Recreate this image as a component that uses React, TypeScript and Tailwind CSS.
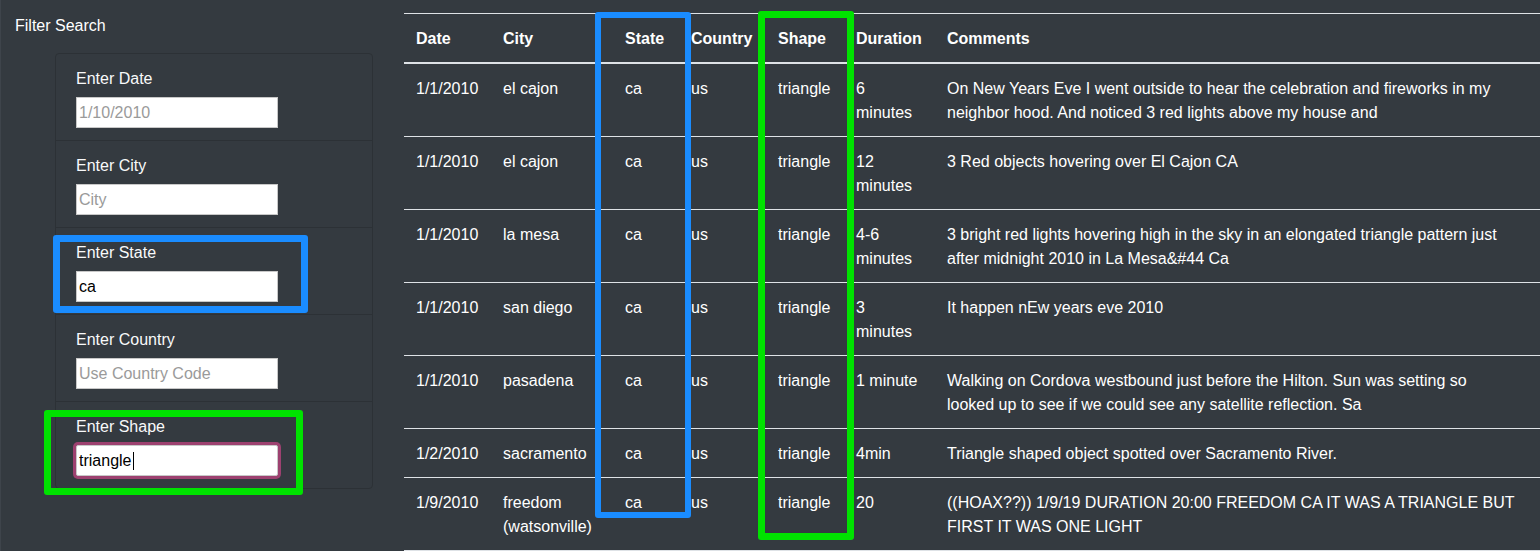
import React from "react";

type Sighting = {
  date: string;
  city: string;
  state: string;
  country: string;
  shape: string;
  duration: string;
  comments: string;
};

const rows: Sighting[] = [
  {
    date: "1/1/2010",
    city: "el cajon",
    state: "ca",
    country: "us",
    shape: "triangle",
    duration: "6 minutes",
    comments:
      "On New Years Eve I went outside to hear the celebration and fireworks in my neighbor hood. And noticed 3 red lights above my house and",
  },
  {
    date: "1/1/2010",
    city: "el cajon",
    state: "ca",
    country: "us",
    shape: "triangle",
    duration: "12 minutes",
    comments: "3 Red objects hovering over El Cajon CA",
  },
  {
    date: "1/1/2010",
    city: "la mesa",
    state: "ca",
    country: "us",
    shape: "triangle",
    duration: "4-6 minutes",
    comments:
      "3 bright red lights hovering high in the sky in an elongated triangle pattern just after midnight 2010 in La Mesa&#44 Ca",
  },
  {
    date: "1/1/2010",
    city: "san diego",
    state: "ca",
    country: "us",
    shape: "triangle",
    duration: "3 minutes",
    comments: "It happen nEw years eve 2010",
  },
  {
    date: "1/1/2010",
    city: "pasadena",
    state: "ca",
    country: "us",
    shape: "triangle",
    duration: "1 minute",
    comments:
      "Walking on Cordova westbound just before the Hilton. Sun was setting so looked up to see if we could see any satellite reflection. Sa",
  },
  {
    date: "1/2/2010",
    city: "sacramento",
    state: "ca",
    country: "us",
    shape: "triangle",
    duration: "4min",
    comments: "Triangle shaped object spotted over Sacramento River.",
  },
  {
    date: "1/9/2010",
    city: "freedom (watsonville)",
    state: "ca",
    country: "us",
    shape: "triangle",
    duration: "20",
    comments:
      "((HOAX??)) 1/9/19 DURATION 20:00 FREEDOM CA IT WAS A TRIANGLE BUT FIRST IT WAS ONE LIGHT",
  },
];

const filters = [
  { label: "Enter Date", placeholder: "1/10/2010", value: "" },
  { label: "Enter City", placeholder: "City", value: "" },
  { label: "Enter State", placeholder: "", value: "ca" },
  { label: "Enter Country", placeholder: "Use Country Code", value: "" },
  { label: "Enter Shape", placeholder: "", value: "triangle", focused: true },
];

function FilterItem({
  label,
  placeholder,
  value,
  focused,
  last,
}: {
  label: string;
  placeholder: string;
  value: string;
  focused?: boolean;
  last?: boolean;
}) {
  return (
    <li className={`px-[20px] pt-[13px] pb-3 ${last ? "" : "border-b border-[#2c3136]"}`}>
      <label className="block text-base leading-6 mb-[6px] text-[#f8f9fa]">{label}</label>
      <div className="relative w-[202px]">
        <input
          readOnly
          value={value}
          placeholder={placeholder}
          className={`block w-[202px] h-[31px] bg-white border border-[#c8c8c8] px-[2px] pt-px text-base text-black placeholder:text-[#9a9a9a] outline-none ${
            focused ? "ring-[3px] ring-[#9d4170] rounded-[2px]" : ""
          }`}
        />
        {focused && <span className="absolute left-[57px] top-[7px] h-[18px] w-px bg-black" />}
      </div>
    </li>
  );
}

export default function App() {
  return (
    <div className="flex h-[551px] overflow-hidden bg-[#343a40] text-white font-['Liberation_Sans',Arial,sans-serif]">
      {/* Sidebar */}
      <aside className="relative w-[404px] shrink-0 border-l border-[#3e444b]">
        <h2 className="pl-[14px] pt-[14px] text-base leading-6 font-normal">Filter Search</h2>
        <ul className="ml-[54px] mt-[15px] w-[318px] rounded border border-[#2c3136]">
          {filters.map((f, i) => (
            <FilterItem key={f.label} {...f} last={i === filters.length - 1} />
          ))}
        </ul>

        {/* highlight boxes */}
        <div className="absolute left-[52px] top-[235px] w-[255px] h-[78px] border-[7px] border-[#1a8cff] rounded-[3px]" />
        <div className="absolute left-[43px] top-[410px] w-[259px] h-[85px] border-[7px] border-[#00e200] rounded-[3px]" />
      </aside>

      {/* Table */}
      <main className="relative flex-1 pt-[13px]">
        <table className="w-full table-fixed border-collapse text-base leading-6 text-left">
          <colgroup>
            <col className="w-[87px]" />
            <col className="w-[122px]" />
            <col className="w-[66px]" />
            <col className="w-[87px]" />
            <col className="w-[78px]" />
            <col className="w-[91px]" />
            <col />
          </colgroup>
          <thead>
            <tr className="border-t border-[#dee2e6] border-b-2 border-b-[#dee2e6]">
              {["Date", "City", "State", "Country", "Shape", "Duration", "Comments"].map((h) => (
                <th key={h} className="px-3 pt-[13px] pb-[11px] font-bold align-bottom">
                  {h}
                </th>
              ))}
            </tr>
          </thead>
          <tbody>
            {rows.map((r, i) => (
              <tr key={i} className="border-b border-[#dee2e6]">
                <td className="px-3 pt-[13px] pb-[11px] align-top">{r.date}</td>
                <td className="px-3 pt-[13px] pb-[11px] align-top">{r.city}</td>
                <td className="px-3 pt-[13px] pb-[11px] align-top">{r.state}</td>
                <td className="px-3 pt-[13px] pb-[11px] align-top">{r.country}</td>
                <td className="px-3 pt-[13px] pb-[11px] align-top">{r.shape}</td>
                <td className="px-3 pt-[13px] pb-[11px] align-top">{r.duration}</td>
                <td className="pl-3 pr-[24px] pt-[13px] pb-[11px] align-top">{r.comments}</td>
              </tr>
            ))}
          </tbody>
        </table>

        {/* highlight boxes */}
        <div className="absolute left-[191px] top-[12px] w-[96px] h-[506px] border-[6px] border-[#1a8cff] rounded-[3px]" />
        <div className="absolute left-[354px] top-[11px] w-[96px] h-[529px] border-[7px] border-[#00e200] rounded-[3px]" />
      </main>
    </div>
  );
}
